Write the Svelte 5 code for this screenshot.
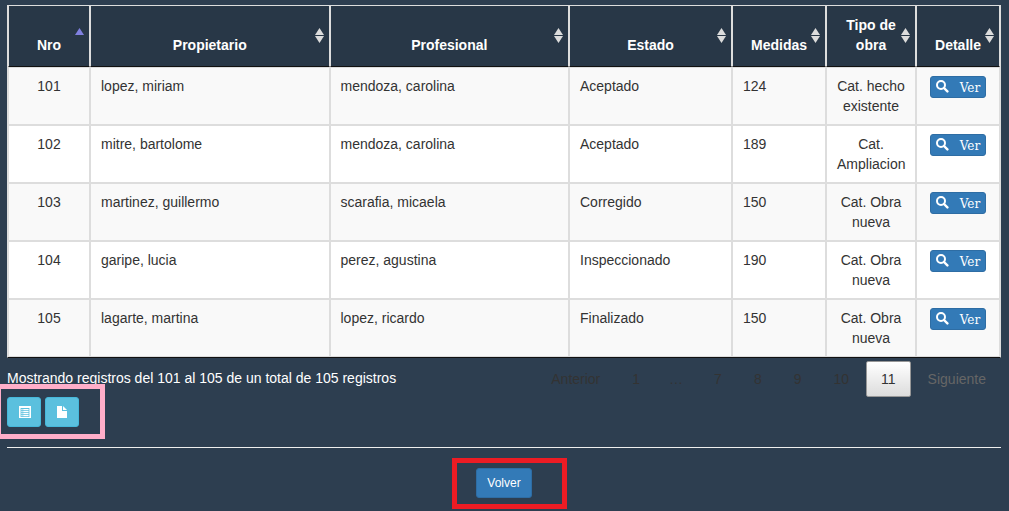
<script>
  const columns = ['Nro', 'Propietario', 'Profesional', 'Estado', 'Medidas', 'Tipo de obra', 'Detalle'];
  const rows = [
    [101, 'lopez, miriam', 'mendoza, carolina', 'Aceptado', 124, 'Cat. hecho existente'],
    [102, 'mitre, bartolome', 'mendoza, carolina', 'Aceptado', 189, 'Cat. Ampliacion'],
    [103, 'martinez, guillermo', 'scarafia, micaela', 'Corregido', 150, 'Cat. Obra nueva'],
    [104, 'garipe, lucia', 'perez, agustina', 'Inspeccionado', 190, 'Cat. Obra nueva'],
    [105, 'lagarte, martina', 'lopez, ricardo', 'Finalizado', 150, 'Cat. Obra nueva']
  ];
  const pages = ['Anterior', '1', '…', '7', '8', '9', '10', '11', 'Siguiente'];
</script>

<main>
  <table>
    <colgroup>
      <col class="nro" /><col /><col /><col class="estado" /><col class="medidas" /><col class="tipo" /><col class="detalle" />
    </colgroup>
    <thead>
      <tr>
        {#each columns as name, i}
          <th scope="col">
            {name}
            <svg class="sort" class:asc={i === 0} width="9" height="15" viewBox="0 0 9 15" aria-hidden="true">
              <path d="M4.5 0L9 7H0z" />
              {#if i > 0}<path d="M0 8h9L4.5 15z" />{/if}
            </svg>
          </th>
        {/each}
      </tr>
    </thead>
    <tbody>
      {#each rows as row}
        <tr>
          {#each row as cell, i}
            <td class:center={i === 0 || i === 5}>{cell}</td>
          {/each}
          <td class="center">
            <button class="btn ver">
              <svg width="13" height="13" viewBox="0 0 13 13" aria-hidden="true">
                <circle cx="5" cy="5" r="4" fill="none" stroke="#fff" stroke-width="2" />
                <path d="M8 8L11.4 11.4" stroke="#fff" stroke-width="2.4" stroke-linecap="round" />
              </svg>
              <span>Ver</span>
            </button>
          </td>
        </tr>
      {/each}
    </tbody>
  </table>

  <div class="footer">
    <div class="left">
      <div class="info">Mostrando registros del 101 al 105 de un total de 105 registros</div>
      <div class="exports">
        <button class="btn export" aria-label="Exportar listado">
          <svg width="14" height="12" viewBox="-2 0 14 12" aria-hidden="true">
            <path fill="#fff" fill-rule="evenodd" d="M0 0h12v12H0zM1.6 2v9h8.8V2z" />
            <path fill="#fff" d="M2.4 3h1.2v1.2H2.4zM4.2 3h5.4v1.2H4.2zM2.4 5h1.2v1.2H2.4zM4.2 5h5.4v1.2H4.2zM2.4 7h1.2v1.2H2.4zM4.2 7h5.4v1.2H4.2zM2.4 9h1.2v1.2H2.4zM4.2 9h5.4v1.2H4.2z" />
          </svg>
        </button>
        <button class="btn export" aria-label="Exportar archivo">
          <svg width="14" height="12" viewBox="-2 0 14 12" aria-hidden="true">
            <path fill="#fff" d="M0 0h5v5h5v7H0zM6 0l4 4H6z" />
          </svg>
        </button>
      </div>
    </div>
    <nav aria-label="Paginación">
      {#each pages as page}
        {#if page === '…'}
          <span class="ellipsis">…</span>
        {:else}
          <button class="page" class:current={page === '11'} class:off={page === 'Siguiente'}>{page}</button>
        {/if}
      {/each}
    </nav>
  </div>

  <hr />
  <div class="back">
    <button class="btn volver">Volver</button>
  </div>
</main>

<style>
  :global(body) {
    background: #2d3e50;
    font: 14px/20px "Liberation Sans", Arial, sans-serif;
    color: #333;
    overflow-x: hidden;
  }
  main {
    padding: 5px 8px 13px 7px;
  }
  table {
    width: 100%;
    table-layout: fixed;
    border-collapse: separate;
    border-spacing: 0;
    border: 1px solid #ddd;
    border-bottom-color: #111;
  }
  .nro { width: 82px; }
  .estado { width: 163px; }
  .medidas { width: 94px; }
  .tipo { width: 90px; }
  .detalle { width: 84px; }
  th {
    padding: 9px 18px 11px;
    border: 1px solid #ddd;
    border-width: 0 1px 1px;
    border-bottom-color: #111;
    background: #283747;
    color: #fff;
    text-align: center;
    vertical-align: bottom;
    position: relative;
  }
  .sort {
    position: absolute;
    right: 5px;
    top: 22px;
    fill: #dcdcdc;
  }
  .asc {
    fill: #8080e0;
  }
  td {
    padding: 8px 10px;
    border: 1px solid #ddd;
    background: #fff;
    vertical-align: top;
  }
  tbody tr:nth-child(odd) td {
    background: #f9f9f9;
  }
  .center {
    text-align: center;
  }
  button {
    font: inherit;
    margin: 0;
    cursor: pointer;
  }
  .btn {
    border: 1px solid #2e6da4;
    border-radius: 3px;
    background: #337ab7;
    color: #fff;
    font-size: 12px;
    line-height: 18px;
    padding: 5px 10px;
  }
  .btn svg {
    display: block;
  }
  .ver {
    display: flex;
    align-items: flex-start;
    gap: 11px;
    margin: 0 auto;
    padding: 2px 5px 0;
    font-family: "DejaVu Serif", serif;
  }
  .ver svg {
    margin-top: 1px;
  }
  .footer {
    display: flex;
    justify-content: space-between;
    align-items: flex-start;
  }
  .info {
    padding-top: 10px;
    color: #fff;
  }
  .exports {
    display: flex;
    gap: 4px;
    padding-top: 9px;
    position: relative;
  }
  .exports::after {
    content: "";
    position: absolute;
    left: -11px;
    top: -4px;
    width: 99px;
    height: 45px;
    border: 5px solid #ffaec9;
    pointer-events: none;
  }
  .export {
    display: flex;
    align-items: center;
    justify-content: center;
    width: 34px;
    height: 30px;
    padding: 0;
    border-color: #46b8da;
    background: #5bc0de;
  }
  .export svg {
    flex: none;
  }
  nav {
    display: flex;
    padding-top: 3px;
  }
  .page {
    margin-left: 2px;
    padding: 7px 14px;
    border: 1px solid transparent;
    border-radius: 2px;
    background: none;
    color: #333;
  }
  .current {
    border-color: #979797;
    background: linear-gradient(#fff, #dcdcdc);
  }
  .off {
    color: #666;
  }
  .ellipsis {
    padding: 8px 14px;
  }
  hr {
    margin: 20px 0;
    border: 0;
    border-top: 1px solid #eee;
  }
  .back {
    display: flex;
    justify-content: center;
  }
  .volver {
    position: relative;
  }
  .volver::after {
    content: "";
    position: absolute;
    left: -25px;
    top: -11px;
    width: 105px;
    height: 41px;
    border: 5px solid #ed1c24;
    pointer-events: none;
  }
</style>
